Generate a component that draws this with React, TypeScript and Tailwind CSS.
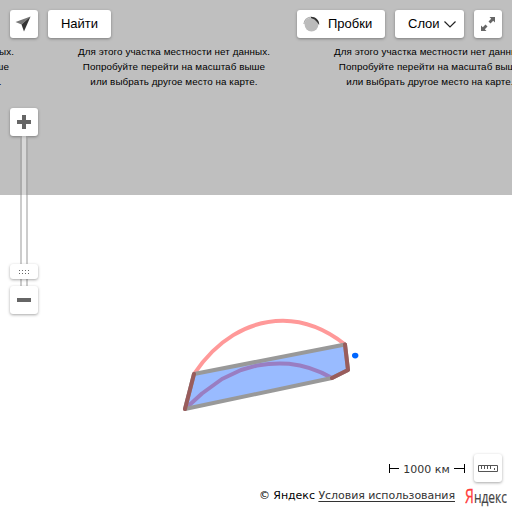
import type { ReactNode } from 'react';

const NOTICE = [
  'Для этого участка местности нет данных.',
  'Попробуйте перейти на масштаб выше',
  'или выбрать другое место на карте.',
];

const BUTTON = 'flex h-7 shrink-0 items-center rounded-[3px] bg-white shadow-[0_1px_3px_rgba(0,0,0,0.35)]';

function MapButton({ className = '', label, children }: { className?: string; label?: string; children: ReactNode }) {
  return (
    <button type="button" aria-label={label} className={`${BUTTON} ${className}`}>
      {children}
    </button>
  );
}

function EmptyTile() {
  return (
    <div className="w-64 shrink-0 pt-11 text-center text-[9.85px] leading-[15px] tracking-[0.07px] text-black">
      {NOTICE.map((line) => (
        <p key={line} className="whitespace-nowrap">{line}</p>
      ))}
    </div>
  );
}

const OUTLINE = 'M194 374L345 344.500L348 370L332 378L185 409Z';

function Geometry() {
  return (
    <svg className="absolute inset-0" width="512" height="512" fill="none" strokeWidth="4" strokeLinejoin="round" strokeLinecap="round">
      <path
        d="M194 374C216 341 247 321 283 320.800C306 321 328 331 345 344.500M332 378Q311 366 289 363.800Q274 362.500 257 365.500L241 370L222 379L202 393.500L185 409"
        stroke="#ff0000"
        strokeOpacity="0.4"
      />
      <path d={OUTLINE} fill="#0055ff" fillOpacity="0.4" />
      <path d={OUTLINE} stroke="#999999" />
      <path d="M185 409L194 374M345 344.500L348 370L332 378" stroke="#995c5c" />
      <ellipse cx="355.200" cy="355.600" rx="3.200" ry="2.800" fill="#0066ff" />
    </svg>
  );
}

function ZoomControl() {
  return (
    <div className="flex w-7 flex-col items-center">
      <MapButton label="+" className="w-7 justify-center">
        <svg width="14" height="14"><path d="M5 0h4v5h5v4H9v5H5V9H0V5h5z" fill="#666" /></svg>
      </MapButton>
      <div className="h-32 w-2 border-x-2 border-black/20 bg-white/40" />
      <div className="z-10 grid h-[15px] w-7 place-items-center rounded-[3px] bg-white shadow-[0_1px_3px_rgba(0,0,0,0.35)]">
        <svg width="10" height="4" fill="#666">
          {[0, 3, 6, 9].map((x) => (
            <g key={x}><rect x={x} width="1" height="1" /><rect x={x} y="3" width="1" height="1" /></g>
          ))}
        </svg>
      </div>
      <div className="h-[7px] w-2 border-x-2 border-black/20 bg-white/40" />
      <MapButton label="−" className="w-7 justify-center">
        <span className="h-1 w-3.5 bg-[#666]" />
      </MapButton>
    </div>
  );
}

export default function App() {
  return (
    <main className="relative h-[512px] w-[512px] overflow-hidden bg-white font-['Liberation_Sans',Arial,sans-serif] text-black">
      <div className="absolute inset-x-0 top-0 h-[195px] overflow-hidden bg-[#bfbfbf]">
        <div className="-ml-[210px] flex w-[768px]">
          <EmptyTile />
          <EmptyTile />
          <EmptyTile />
        </div>
      </div>
      <Geometry />

      <div className="relative flex h-full flex-col">
        <header className="flex gap-2.5 p-2.5 text-[13px]">
          <MapButton label="Моё местоположение" className="w-7 justify-center pr-0.5">
            <svg width="16" height="16" viewBox="0 0 16 16">
              <path d="M0.500 6L15.500 0.500L6.500 8.500Z" fill="#777" />
              <path d="M15.500 0.500L9 15.500L6.500 8.500Z" fill="#333" />
            </svg>
          </MapButton>
          <MapButton className="w-[63px] justify-center">Найти</MapButton>
          <MapButton className="ml-auto w-[88px] gap-2 pl-1.5">
            <svg width="17" height="16" viewBox="0 0 17 16">
              <circle cx="8.500" cy="8.500" r="6.900" fill="#bbb" />
              <path d="M1 8A7.300 7.300 0 0 1 8 1" fill="none" stroke="#aaa" strokeWidth="1.200" />
              <path d="M8 0.800C12.500 0.800 16.500 4 16.200 9L14 6Q12 3 8 2Z" fill="#333" />
            </svg>
            Пробки
          </MapButton>
          <MapButton className="w-[69px] gap-1 pl-[13px]">
            Слои
            <svg width="12" height="7" viewBox="0 0 12 7" className="shrink-0"><path d="M.5.5L6 6L11.500.5" fill="none" stroke="#222" strokeWidth="1.200" /></svg>
          </MapButton>
          <MapButton label="Развернуть" className="w-7 justify-center">
            <svg width="14" height="14" viewBox="0 0 14 14" fill="#666">
              <path d="M8.500 0H14v5.500l-1.800-1.800l-2.700 2.700l-2-2l2.700-2.700z" />
              <path d="M5.500 14H0V8.500l1.800 1.800l2.700-2.700l2 2l-2.700 2.700z" />
            </svg>
          </MapButton>
        </header>

        <div className="px-2.5 pt-[60px]">
          <ZoomControl />
        </div>

        <footer className="mt-auto font-['DejaVu_Sans',Verdana,sans-serif] text-[11px]">
          <div className="flex h-7 items-center justify-end gap-[9px] pr-2.5">
            <div className="flex h-[14px] items-center text-[#333]">
              <span className="h-[9px] w-px bg-black" />
              <span className="h-px w-[9px] bg-black" />
              <span className="w-[55px] pt-[4px] text-center whitespace-nowrap">1000 км</span>
              <span className="h-px w-[10px] bg-black" />
              <span className="h-[9px] w-px bg-black" />
            </div>
            <MapButton label="Линейка" className="w-7 justify-center">
              <svg width="20" height="7" fill="none" stroke="#555">
                <path d="M.5.5h19v6H.5zM3.500 1v3M6.500 1v3M9.500 1v3M12.500 1v3M16.500 3v2" />
              </svg>
            </MapButton>
          </div>
          <div className="flex h-[30px] items-center justify-end pr-[5px]">
            <span className="whitespace-nowrap pb-0.5 tracking-[-0.05px]">
              © Яндекс <a href="#" className="text-[#333] underline underline-offset-2">Условия использования</a>
            </span>
            <svg className="ml-2.5 shrink-0 font-['Open_Sans',sans-serif]" width="42" height="24" viewBox="0 0 42 24">
              <text x="0" y="17.700" textLength="42" lengthAdjust="spacingAndGlyphs">
                <tspan fontSize="20" fill="#ff3b3b" stroke="#ff3b3b" strokeWidth="0.300">Я</tspan>
                <tspan fontSize="17" fill="#444" stroke="#444" strokeWidth="0.200">ндекс</tspan>
              </text>
            </svg>
          </div>
        </footer>
      </div>
    </main>
  );
}
